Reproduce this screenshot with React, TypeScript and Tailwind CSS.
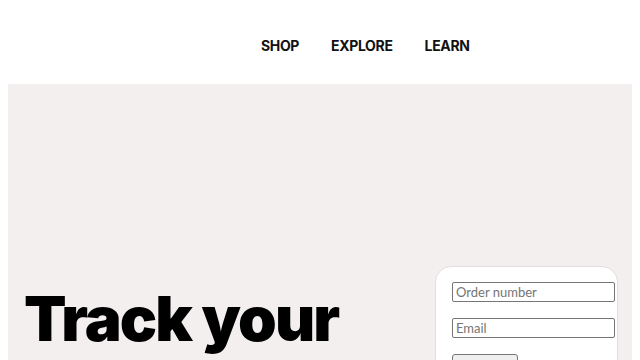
export default function App() {
  return (
    <div className="bg-white font-['Inter',sans-serif] overflow-hidden h-[360px]">
      <header className="h-[84px] flex items-center pl-[261px] pt-[6px]">
        <nav className="flex items-center gap-[32px] text-[14px] font-bold text-[#111] tracking-tight">
          <a href="#">SHOP</a>
          <a href="#">EXPLORE</a>
          <a href="#">LEARN</a>
        </nav>
      </header>
      <main className="mx-2 bg-[#f3efee] h-[420px] flex justify-between pl-4 pr-[14px]">
        <div className="pt-[204px]">
          <h1 className="text-[62px] leading-none font-black tracking-[-0.03em] text-black">
            Track your
          </h1>
        </div>
        <form className="mt-[182px] w-[183px] h-[170px] bg-white rounded-2xl border border-[#e2dedd] pl-4 pt-[15px] flex flex-col gap-[16px] font-['Lato',sans-serif]">
          <input
            type="text"
            placeholder="Order number"
            className="w-[163px] h-[20px] border border-[#767676] rounded-[2px] px-[3px] text-[13px] placeholder:text-[#757575] outline-none"
          />
          <input
            type="email"
            placeholder="Email"
            className="w-[163px] h-[20px] border border-[#767676] rounded-[2px] px-[3px] text-[13px] placeholder:text-[#757575] outline-none"
          />
          <button
            type="button"
            className="w-[66px] h-[34px] border border-[#767676] rounded-[3px] bg-[#efefef] text-[13px]"
          >
            Track
          </button>
        </form>
      </main>
    </div>
  );
}
